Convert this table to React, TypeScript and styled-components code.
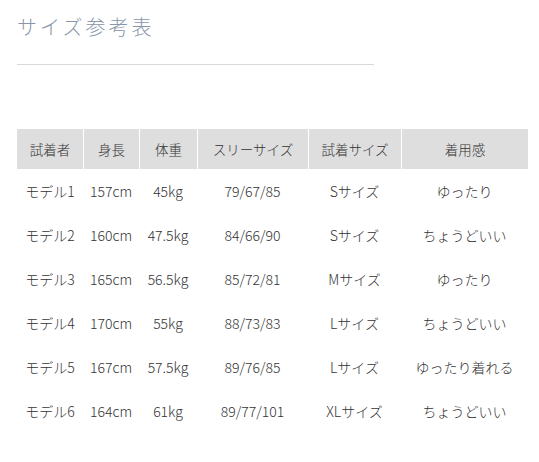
import React from "react";
import styled, { createGlobalStyle } from "styled-components";

const Global = createGlobalStyle`
  html, body { margin: 0; padding: 0; background: #fff; }
  body { font-family: "Noto Sans CJK JP", "Noto Sans", sans-serif; color: #333; }
`;

const Page = styled.div`
  padding: 13px 0 0 17px;
  width: 511px;
`;

const Title = styled.h2`
  margin: 0;
  font-size: 20px;
  line-height: 28px;
  font-weight: 300;
  letter-spacing: 3px;
  color: #8796a8;
`;

const Rule = styled.hr`
  margin: 23px 0 0 0;
  width: 357px;
  border: 0;
  border-top: 1px solid #d9d9d9;
  height: 0;
`;

const Table = styled.table`
  margin-top: 64px;
  width: 511px;
  border-collapse: separate;
  border-spacing: 0;
  table-layout: fixed;
  font-size: 14px;
  font-weight: 300;
  color: #333;
`;

const Th = styled.th<{ $w: number }>`
  box-sizing: border-box;
  width: ${(p) => p.$w}px;
  height: 40px;
  padding: 0;
  background: #dedede;
  font-weight: 300;
  font-size: 13.5px;
  text-align: center;
  vertical-align: middle;
  & + & { border-left: 1px solid #fff; }
`;

const Td = styled.td`
  height: 44px;
  padding: 0;
  text-align: center;
  vertical-align: middle;
  white-space: nowrap;
`;

const cols = [
  { h: "試着者", w: 66 },
  { h: "身長", w: 56 },
  { h: "体重", w: 58 },
  { h: "スリーサイズ", w: 111 },
  { h: "試着サイズ", w: 93 },
  { h: "着用感", w: 127 },
];

const rows = [
  ["モデル1", "157cm", "45kg", "79/67/85", "Sサイズ", "ゆったり"],
  ["モデル2", "160cm", "47.5kg", "84/66/90", "Sサイズ", "ちょうどいい"],
  ["モデル3", "165cm", "56.5kg", "85/72/81", "Mサイズ", "ゆったり"],
  ["モデル4", "170cm", "55kg", "88/73/83", "Lサイズ", "ちょうどいい"],
  ["モデル5", "167cm", "57.5kg", "89/76/85", "Lサイズ", "ゆったり着れる"],
  ["モデル6", "164cm", "61kg", "89/77/101", "XLサイズ", "ちょうどいい"],
];

export default function App() {
  return (
    <>
      <Global />
      <Page>
        <Title>サイズ参考表</Title>
        <Rule />
        <Table>
          <thead>
            <tr>
              {cols.map((c) => (
                <Th key={c.h} $w={c.w}>{c.h}</Th>
              ))}
            </tr>
          </thead>
          <tbody>
            {rows.map((r) => (
              <tr key={r[0]}>
                {r.map((v, i) => (
                  <Td key={i}>{v}</Td>
                ))}
              </tr>
            ))}
          </tbody>
        </Table>
      </Page>
    </>
  );
}
